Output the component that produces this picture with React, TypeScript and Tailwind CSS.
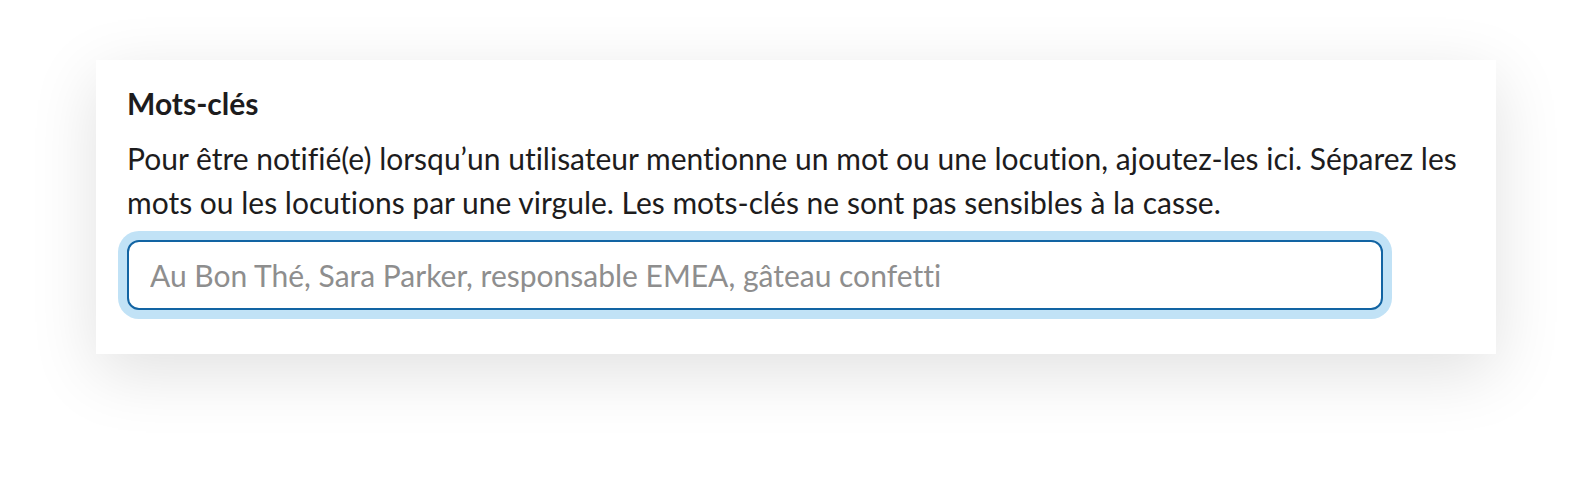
import React from "react";

export default function App() {
  return (
    <div
      className="w-[1592px] h-[486px] bg-white overflow-hidden [font-variant-ligatures:none]"
      style={{ fontFamily: "Lato, 'Noto Sans', sans-serif" }}
    >
      <div className="ml-[96px] mt-[60px] w-[1400px] h-[294px] bg-white pt-[21px] pl-[31px] shadow-[0_18px_64px_rgba(0,0,0,0.12)]">
        <div className="w-[1256px]">
          <div className="text-[30px] leading-[44px] font-bold text-[#1d1c1d]">Mots-clés</div>
          <p className="mt-[11px] text-[30px] leading-[44px] text-[#1d1c1d]">
            <span className="whitespace-nowrap">
              Pour être notifié(e) lorsqu’un utilisateur mentionne un mot ou une locution, ajoutez-les ici. Séparez les
            </span>
            <br />
            <span className="whitespace-nowrap">
              mots ou les locutions par une virgule. Les mots-clés ne sont pas sensibles à la casse.
            </span>
          </p>
          <input
            type="text"
            placeholder="Au Bon Thé, Sara Parker, responsable EMEA, gâteau confetti"
            className="mt-[16px] block w-[1256px] h-[70px] rounded-[12px] border-2 border-[#1264a3] bg-white pl-[21px] text-[30px] text-[#1d1c1d] placeholder:text-[#8e8e8e] outline-none shadow-[0_0_0_9px_#c1e2f6] [font-variant-ligatures:none]"
            style={{ fontFamily: "Lato, 'Noto Sans', sans-serif" }}
          />
        </div>
      </div>
    </div>
  );
}
